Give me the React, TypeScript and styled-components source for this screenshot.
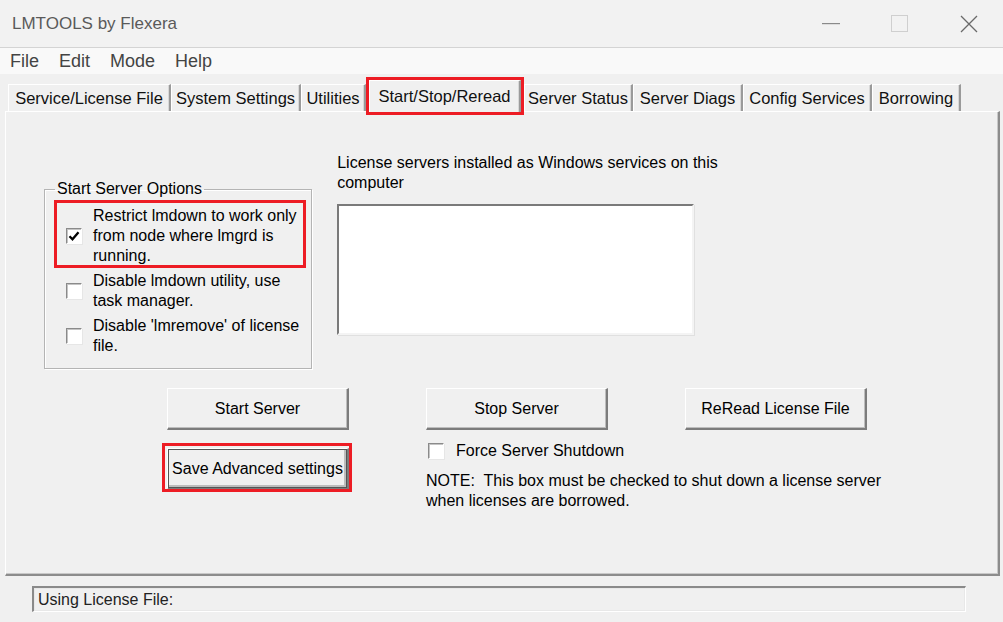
import React from 'react'
import styled, { createGlobalStyle } from 'styled-components'

const TABS = [
  { label: 'Service/License File', w: 163 },
  { label: 'System Settings', w: 130 },
  { label: 'Utilities', w: 65 },
  { label: 'Start/Stop/Reread', w: 152, active: true },
  { label: 'Server Status', w: 109 },
  { label: 'Server Diags', w: 110 },
  { label: 'Config Services', w: 129 },
  { label: 'Borrowing', w: 89 },
]

const MENU = ['File', 'Edit', 'Mode', 'Help']

const MARK = '#ed1c24'

const GlobalStyle = createGlobalStyle`
  html, body {
    margin: 0;
    padding: 0;
    background: #f0f0f0;
  }
  body {
    font-family: "Liberation Sans", Arial, sans-serif;
    color: #000;
  }
  * {
    box-sizing: border-box;
  }
`

const Window = styled.div`
  width: 1003px;
  height: 622px;
  display: flex;
  flex-direction: column;
  background: #f0f0f0;
  overflow: hidden;
`

const TitleBar = styled.div`
  height: 48px;
  flex: none;
  display: flex;
  align-items: center;
  background: #f2f2f2;
  border-bottom: 1px solid #d4d4d4;
`

const Title = styled.div`
  flex: 1;
  padding-left: 12px;
  font-size: 17px;
  color: #5a5a5a;
`

const Caption = styled.div`
  width: 69px;
  height: 47px;
  display: flex;
  align-items: center;
  justify-content: center;
`

const MenuBar = styled.div`
  height: 26px;
  flex: none;
  display: flex;
  align-items: center;
  background: #f9f9f9;
`

const MenuItem = styled.span`
  padding: 0 10px;
  font-size: 18px;
  color: #444;
`

const Body = styled.div`
  flex: 1;
  display: flex;
  flex-direction: column;
  padding: 0 3px 0 5px;
`

const TabStrip = styled.div`
  height: 37px;
  flex: none;
  display: flex;
  align-items: flex-end;
  padding-left: 3px;
`

const Tab = styled.div<{ $w: number; $active?: boolean }>`
  position: relative;
  width: ${(p) => p.$w}px;
  height: ${(p) => (p.$active ? 32 : 27)}px;
  margin: ${(p) => (p.$active ? '0 3px -1px 3px' : '0')};
  z-index: ${(p) => (p.$active ? 2 : 0)};
  display: flex;
  align-items: center;
  justify-content: center;
  background: #f0f0f0;
  border-top: 1px solid #ffffff;
  border-left: 1px solid #ffffff;
  border-right: 2px solid #9a9a9a;
  box-shadow: inset -1px 0 0 #d8d8d8;
  font-size: 16.5px;
  color: #111;
  white-space: nowrap;
  outline: ${(p) => (p.$active ? `3px solid ${MARK}` : 'none')};
`

const TabPanel = styled.div`
  height: 465px;
  flex: none;
  display: flex;
  flex-direction: column;
  background: #f0f0f0;
  border-top: 1px solid #ffffff;
  border-left: 1px solid #ffffff;
  border-right: 2px solid #8c8c8c;
  border-bottom: 2px solid #8c8c8c;
  box-shadow: inset -1px -1px 0 #c8c8c8;
`

const TopRow = styled.div`
  display: flex;
  align-items: flex-start;
  padding-left: 38px;
`

const GroupBox = styled.fieldset`
  width: 268px;
  margin: 67px 0 0 0;
  padding: 7px 12px 12px 21px;
  border: 1px solid #b4b4b4;
  box-shadow: inset 1px 1px 0 #ffffff, 1px 1px 0 #ffffff;
  display: flex;
  flex-direction: column;
  gap: 5px;
`

const Legend = styled.legend`
  margin-left: -11px;
  padding: 0 2px;
  font-size: 16px;
  line-height: 20px;
`

const OptionRow = styled.div<{ $marked?: boolean }>`
  position: relative;
  display: flex;
  align-items: center;
  gap: 11px;

  &::after {
    content: '';
    display: ${(p) => (p.$marked ? 'block' : 'none')};
    position: absolute;
    top: -6px;
    left: -12px;
    right: -7px;
    bottom: -2px;
    border: 3px solid ${MARK};
  }
`

const Label = styled.div`
  font-size: 16px;
  line-height: 20px;
  white-space: nowrap;
`

const Box = styled.span`
  flex: none;
  width: 16px;
  height: 16px;
  display: flex;
  align-items: center;
  justify-content: center;
  background: #ffffff;
  border-top: 1px solid #8a8a8a;
  border-left: 1px solid #8a8a8a;
  border-right: 1px solid #ffffff;
  border-bottom: 1px solid #ffffff;
  box-shadow: inset 1px 1px 0 #c4c4c4, 1px 1px 0 #e6e6e6;
`

const ServiceColumn = styled.div`
  margin-left: 25px;
  padding-top: 41px;
  display: flex;
  flex-direction: column;
  gap: 11px;
`

const ListBox = styled.div`
  width: 357px;
  height: 131px;
  background: #ffffff;
  border-top: 2px solid #7a7a7a;
  border-left: 2px solid #7a7a7a;
  border-right: 2px solid #f4f4f4;
  border-bottom: 2px solid #f4f4f4;
  box-shadow: 1px 1px 0 #e0e0e0;
`

const ButtonGrid = styled.div`
  margin-top: 19px;
  padding-left: 161px;
  display: grid;
  grid-template-columns: 182px 182px 182px;
  column-gap: 77px;
  row-gap: 11px;
  align-items: start;
`

const Button = styled.div<{ $marked?: boolean; $default?: boolean }>`
  position: relative;
  width: 182px;
  height: 42px;
  margin-top: ${(p) => (p.$marked ? 7 : 0)}px;
  display: flex;
  align-items: center;
  justify-content: center;
  background: #f0f0f0;
  border-top: 1px solid #ffffff;
  border-left: 1px solid #ffffff;
  border-right: 2px solid #7c7c7c;
  border-bottom: 2px solid #7c7c7c;
  box-shadow: ${(p) =>
    p.$default ? 'inset 0 0 0 1px #555, inset -1px -1px 0 2px #bdbdbd' : 'inset -1px -1px 0 #bdbdbd'};
  font-size: 16px;
  white-space: nowrap;

  &::after {
    content: '';
    display: ${(p) => (p.$marked ? 'block' : 'none')};
    position: absolute;
    top: -6px;
    left: -6px;
    right: -5px;
    bottom: -4px;
    border: 3px solid ${MARK};
  }
`

const ShutdownBlock = styled.div`
  grid-column: 2 / 4;
  display: flex;
  flex-direction: column;
  gap: 10px;
`

const ShutdownRow = styled.div`
  display: flex;
  align-items: center;
  gap: 12px;
  padding-left: 2px;
`

const StatusArea = styled.div`
  flex: 1;
  padding: 10px 34px 0 27px;
`

const StatusField = styled.div`
  height: 26px;
  display: flex;
  align-items: center;
  padding-left: 4px;
  border-top: 2px solid #8a8a8a;
  border-left: 2px solid #8a8a8a;
  border-right: 1px solid #ffffff;
  border-bottom: 1px solid #ffffff;
  box-shadow: inset 0 0 0 1px #e8e8e8;
  font-size: 16px;
  color: #222;
`

function Check({ on }: { on?: boolean }) {
  return (
    <Box>
      {on && (
        <svg width="12" height="12" viewBox="0 0 12 12">
          <path d="M1.5 6.2 L4.5 9.3 L10.5 2.2" fill="none" stroke="#000" strokeWidth="2.3" />
        </svg>
      )}
    </Box>
  )
}

export default function App() {
  return (
    <>
      <GlobalStyle />
      <Window>
        <TitleBar>
          <Title>LMTOOLS by Flexera</Title>
          <Caption>
            <svg width="18" height="2" viewBox="0 0 18 2">
              <rect width="18" height="1.2" fill="#8a8a8a" />
            </svg>
          </Caption>
          <Caption>
            <svg width="17" height="17" viewBox="0 0 17 17">
              <rect x="0.5" y="0.5" width="16" height="16" fill="none" stroke="#cfcfcf" />
            </svg>
          </Caption>
          <Caption>
            <svg width="18" height="18" viewBox="0 0 18 18">
              <path d="M1 1 L17 17 M17 1 L1 17" stroke="#6a6a6a" strokeWidth="1.3" />
            </svg>
          </Caption>
        </TitleBar>

        <MenuBar>
          {MENU.map((m) => (
            <MenuItem key={m}>{m}</MenuItem>
          ))}
        </MenuBar>

        <Body>
          <TabStrip>
            {TABS.map((t) => (
              <Tab key={t.label} $w={t.w} $active={t.active}>
                {t.label}
              </Tab>
            ))}
          </TabStrip>

          <TabPanel>
            <TopRow>
              <GroupBox>
                <Legend>Start Server Options</Legend>
                <OptionRow $marked>
                  <Check on />
                  <Label>
                    Restrict lmdown to work only
                    <br />
                    from node where lmgrd is
                    <br />
                    running.
                  </Label>
                </OptionRow>
                <OptionRow>
                  <Check />
                  <Label>
                    Disable lmdown utility, use
                    <br />
                    task manager.
                  </Label>
                </OptionRow>
                <OptionRow>
                  <Check />
                  <Label>
                    Disable 'lmremove' of license
                    <br />
                    file.
                  </Label>
                </OptionRow>
              </GroupBox>

              <ServiceColumn>
                <Label>
                  License servers installed as Windows services on this
                  <br />
                  computer
                </Label>
                <ListBox />
              </ServiceColumn>
            </TopRow>

            <ButtonGrid>
              <Button>Start Server</Button>
              <Button>Stop Server</Button>
              <Button>ReRead License File</Button>
              <Button $marked $default>
                Save Advanced settings
              </Button>
              <ShutdownBlock>
                <ShutdownRow>
                  <Check />
                  <Label>Force Server Shutdown</Label>
                </ShutdownRow>
                <Label>
                  NOTE:&nbsp; This box must be checked to shut down a license server
                  <br />
                  when licenses are borrowed.
                </Label>
              </ShutdownBlock>
            </ButtonGrid>
          </TabPanel>

          <StatusArea>
            <StatusField>Using License File:</StatusField>
          </StatusArea>
        </Body>
      </Window>
    </>
  )
}
